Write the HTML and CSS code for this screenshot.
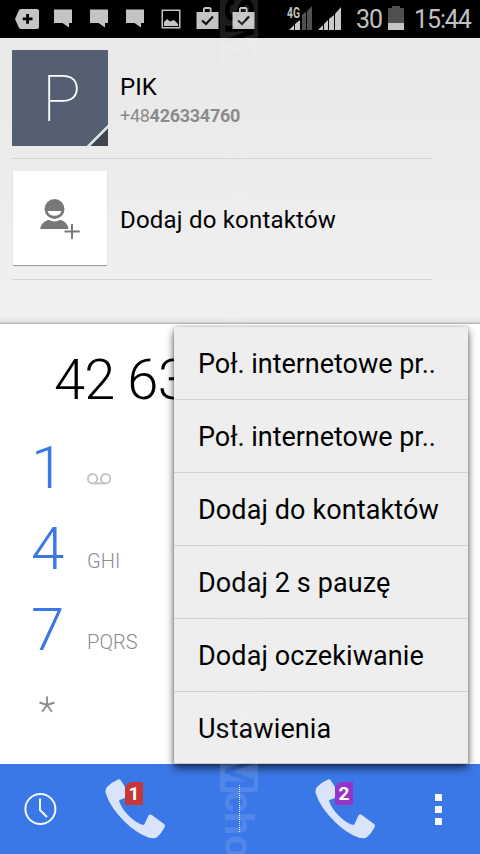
FILE: index.html
```html
<!DOCTYPE html>
<html lang="pl">
<head>
<meta charset="utf-8">
<title>Telefon</title>
<link rel="stylesheet" href="styles.css">
</head>
<body>
<div class="phone">
  <header class="status">
    <svg class="status-left" width="260" height="38" viewBox="0 0 260 38" fill="#c4c4c4">
      <path fill-rule="evenodd" d="M21 9h16q2 0 2 2v16q0 2-2 2H21q-1 0-2-1l-4-9 4-9q1-1 2-1zM26.200 14v3.500h-3.500v2.800h3.500v3.500h2.800v-3.500h3.500v-2.800h-3.500v-3.500z"/>
      <path d="M54 9.500h18V23h-3v4.500L62.500 23H54z"/>
      <path d="M90 9.500h18V23h-3v4.500L98.500 23H90z"/>
      <path d="M126 9.500h18V23h-3v4.500l-6.500-4.500H126z"/>
      <path fill-rule="evenodd" d="M161.500 9.500h19v19h-19zM163 11v16h16V11z"/>
      <path d="M164 26v-4l3-3 3 2.500 4-1.500 4 4v2z"/>
      <g id="bag"><path fill-rule="evenodd" d="M196.500 12H203V8.500l1.500-1.500h5.500l1.500 1.500V12h7v17h-22zM204.800 12h5V9h-5z"/><path d="M202 20.500l4 3.500 7-7.500" fill="none" stroke="#111" stroke-width="2.200"/></g>
      <use href="#bag" x="36"/>
    </svg>
    <div class="status-right">
      <svg width="56" height="26" viewBox="0 0 56 26">
        <path fill="#505050" d="M14 10l4-3.500V25h-4zM19 6l5-5v24h-5z"/>
        <path fill="#c9c9c9" d="M1 25l5-5v5zM7 19l5-4v10H7zM30 25l5-5v5zM36 19l4-4v10h-4zM41 14l5-4v15h-5zM47 9l6-7v23h-6z"/>
        <text class="lte" transform="translate(-1 12.500) scale(.74 1)">4G</text>
      </svg>
      <span class="battery-level">30</span>
      <svg class="battery" width="16" height="24" viewBox="0 0 16 24"><path fill="#505050" d="M4 0h8v2h4v15H0V2h4z"/><path fill="#c4c4c4" d="M0 17h16v7H0z"/></svg>
      <span class="time">15:44</span>
    </div>
  </header>

  <section class="results">
    <div class="result">
      <div class="avatar">P</div>
      <div class="who"><div class="name">PIK</div><div class="number">+48<b>426334760</b></div></div>
    </div>
    <div class="result add">
      <div class="add-tile">
        <svg width="42" height="44" viewBox="0 0 42 44" fill="#787878">
          <path fill-rule="evenodd" d="M15.500 2a10 10 0 1 1 0 20 10 10 0 0 1 0-20zM8.500 14a7.200 6.200 0 0 0 14 0z"/>
          <path d="M1.200 32q1-7 8.300-9.200 6 3.500 12 0 7 2.200 8 9.200z"/>
          <path d="M32 27h2v6.500h6.800v2H34V42h-2v-6.500h-6.500v-2H32z"/>
        </svg>
      </div>
      <div class="name add-name">Dodaj do kontaktów</div>
    </div>
  </section>

  <main class="dialer">
    <div class="typed">42 63</div>
    <div class="key"><span class="digit">1</span><svg class="voicemail" width="24" height="12" viewBox="0 0 24 12" fill="none" stroke="#c4c4c4" stroke-width="1.900"><circle cx="5.600" cy="5.700" r="4.700"/><circle cx="18.600" cy="5.700" r="4.700"/><path d="M5.600 10.400h13"/></svg></div>
    <div class="key"><span class="digit">4</span><span class="letters">GHI</span></div>
    <div class="key"><span class="digit">7</span><span class="letters">PQRS</span></div>
    <div class="key star"><svg width="16" height="17" viewBox="0 0 16 17" fill="none" stroke="#8c8c8c" stroke-width="1.900"><path d="M8 9V0.500M8 9L.5 6.500M8 9l7.500-2.500M8 9l-4.800 6.800M8 9l4.800 6.800"/></svg></div>
  </main>

  <footer class="bar">
    <svg class="clock" width="34" height="34" viewBox="0 0 34 34" fill="none" stroke="#f4f6fc" stroke-width="2"><circle cx="17.400" cy="17" r="15"/><path d="M17 6.500v11.500l7 7"/></svg>
    <div class="call call-one">
      <svg width="62" height="62" viewBox="0 0 62 62"><path fill="#d9e4fa" d="M13 1.500Q14.500.7 15.500 2L22 12q1 1.300.3 2.500L20 20q-5 1.500-6 2.500 2 7.500 9.500 15 9 9 15.500 9.500l4.500-9.500q1-1.500 3-.7L59 46q1.500 1.200.7 3-3 6-7.500 10-2.500 2-8.200.8Q31 55 20 44 5 29 1 16q-1.500-4 1-7Q7 4 13 1.500z"/></svg>
      <span class="sim red">1</span>
    </div>
    <i class="divider"></i>
    <div class="call call-two">
      <svg width="62" height="62" viewBox="0 0 62 62"><path fill="#d9e4fa" d="M13 1.500Q14.500.7 15.500 2L22 12q1 1.300.3 2.500L20 20q-5 1.500-6 2.500 2 7.500 9.500 15 9 9 15.500 9.500l4.500-9.500q1-1.500 3-.7L59 46q1.500 1.200.7 3-3 6-7.500 10-2.500 2-8.200.8Q31 55 20 44 5 29 1 16q-1.500-4 1-7Q7 4 13 1.500z"/></svg>
      <span class="sim purple">2</span>
    </div>
    <div class="more"><i></i><i></i><i></i></div>
  </footer>

  <ul class="menu">
    <li><span class="m-net">Poł. internetowe pr..</span></li>
    <li><span class="m-net">Poł. internetowe pr..</span></li>
    <li><span>Dodaj do kontaktów</span></li>
    <li><span>Dodaj 2 s pauzę</span></li>
    <li><span>Dodaj oczekiwanie</span></li>
    <li><span>Ustawienia</span></li>
  </ul>

  <svg class="mark" width="40" height="854" viewBox="0 0 40 854">
    <defs>
      <mask id="cut"><rect width="97" height="38" rx="3" fill="#fff"/><text x="3" y="33" textLength="92" lengthAdjust="spacingAndGlyphs" fill="#000">GSM</text></mask>
      <g id="logo"><rect width="97" height="38" rx="3" mask="url(#cut)"/></g>
    </defs>
    <g fill="#fff">
      <g transform="translate(38 -35) rotate(90)"><use href="#logo"/></g>
      <g opacity=".35">
        <g transform="translate(38 127) rotate(90)"><use href="#logo"/><text x="99" y="33">choice</text></g>
        <g transform="translate(38 535) rotate(90)"><use href="#logo"/></g>
      </g>
      <g class="faded" transform="translate(38 695) rotate(90)"><use href="#logo"/><text x="96" y="33">cho</text></g>
    </g>
  </svg>
</div>
</body>
</html>
```
FILE: styles.css
```css
* { box-sizing: border-box; }
body { margin: 0; font-family: Roboto, "Noto Sans", sans-serif; color: #000; }
.phone { position: relative; width: 480px; height: 854px; overflow: hidden; background: #fff; display: flex; flex-direction: column; }
.status { height: 38px; background: #000; display: flex; justify-content: space-between; }
.status-left { flex: none; }
.status-right { display: flex; align-items: flex-start; width: 192px; flex: none; padding-top: 5px; color: #c0c0c0; font-size: 25px; line-height: 30px; white-space: nowrap; }
.status-right > svg:first-child { flex: none; overflow: visible; }
.lte { font-size: 14px; font-weight: 700; fill: #c4c4c4; }
.battery-level { width: 32px; margin-left: 12px; letter-spacing: -1px; }
.battery { flex: none; margin-top: 1px; }
.time { margin-left: 10px; letter-spacing: -1.1px; }

.results { height: 286px; padding: 0 48px 0 12px; background: linear-gradient(#e9e9e9, #f0f0f0 278px, #e4e4e4 284px, #bbb 285px); }
.result { height: 121px; padding-top: 12px; display: flex; border-bottom: 1px solid #d3d3d3; }
.avatar { width: 96px; height: 96px; flex: none; background: linear-gradient(135deg, #546071 0 89%, #d5dadf 89% 91%, #40464e 91%); color: #fff; font-size: 65px; font-weight: 100; line-height: 98px; padding-left: 30px; }
.who { padding: 22px 0 0 12px; }
.name { font-size: 24px; line-height: 30px; letter-spacing: 0; }
.number { font-size: 18px; line-height: 27px; color: #8b8b8b; letter-spacing: -.28px; }
.add-tile { width: 94px; height: 94px; margin: 0 1px; flex: none; background: #fff; border-radius: 1px; box-shadow: 0 1px 1px #999; padding: 26px 0 0 26px; }
.add-name { margin: 34px 0 0 12px; letter-spacing: .2px; }

.dialer { height: 440px; background: #fff; }
.typed { height: 103px; padding: 18px 0 0 54px; font-size: 56px; line-height: 76px; font-weight: 300; white-space: nowrap; letter-spacing: -.8px; }
.key { height: 81px; display: flex; padding-left: 31px; }
.digit { width: 56px; font-size: 60px; line-height: 81px; font-weight: 300; color: #3b78e7; }
.letters { font-size: 20px; line-height: 24px; font-weight: 300; color: #8c8c8c; margin-top: 41px; letter-spacing: .1px; }
.voicemail { margin-top: 46px; flex: none; }
.star { padding: 26px 0 0 39px; }

.bar { height: 90px; background: #3b78e7; display: flex; }
.clock { margin: 28px 0 0 23px; flex: none; }
.call { position: relative; width: 62px; height: 62px; flex: none; }
.call-one { margin: 14px 0 0 48px; }
.call-two { margin: 14px 0 0 75px; }
.sim { position: absolute; left: 20px; top: 4px; width: 18px; height: 23px; color: #fff; font-size: 19px; line-height: 23px; font-weight: 700; text-align: center; clip-path: polygon(5px 0, 100% 0, 100% 100%, 0 100%, 0 5px); }
.red { background: #c83737; }
.purple { background: #9734c8; }
.divider { width: 1px; height: 48px; margin: 21px 0 0 72px; background: repeating-linear-gradient(#e6edfb 0 1px, transparent 1px 2px); }
.more { display: flex; flex-direction: column; gap: 5px; margin: 30px 0 0 58px; }
.more i { width: 7px; height: 7px; background: #f3f5f9; }

.menu { position: absolute; left: 174px; top: 327px; width: 294px; height: 437px; margin: 0; padding: 0; list-style: none; background: #eee; border-radius: 2px; box-shadow: 0 4px 9px rgba(0,0,0,.65), 0 0 3px rgba(0,0,0,.25); }
.menu li { height: 73px; padding: 1px 0 0 24px; font-size: 27px; line-height: 73px; letter-spacing: .1px; border-bottom: 1px solid #d3d3d3; white-space: nowrap; }
.menu li:last-child { height: 72px; border-bottom-color: #ccc; }
.menu .m-net { letter-spacing: -.03px; }
.mark { position: absolute; left: 220px; top: 0; opacity: .11; pointer-events: none; font-size: 41px; font-weight: 700; }
```
